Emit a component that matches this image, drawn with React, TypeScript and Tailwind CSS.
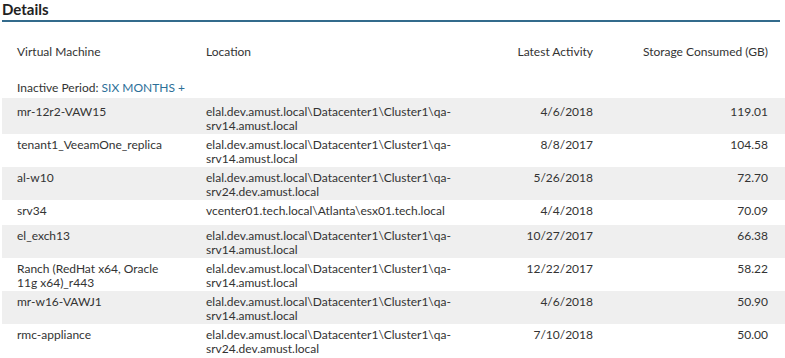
const rows = [
  { vm: "mr-12r2-VAW15", loc: "elal.dev.amust.local\\Datacenter1\\Cluster1\\qa-srv14.amust.local", date: "4/6/2018", gb: "119.01" },
  { vm: "tenant1_VeeamOne_replica", loc: "elal.dev.amust.local\\Datacenter1\\Cluster1\\qa-srv14.amust.local", date: "8/8/2017", gb: "104.58" },
  { vm: "al-w10", loc: "elal.dev.amust.local\\Datacenter1\\Cluster1\\qa-srv24.dev.amust.local", date: "5/26/2018", gb: "72.70" },
  { vm: "srv34", loc: "vcenter01.tech.local\\Atlanta\\esx01.tech.local", date: "4/4/2018", gb: "70.09" },
  { vm: "el_exch13", loc: "elal.dev.amust.local\\Datacenter1\\Cluster1\\qa-srv14.amust.local", date: "10/27/2017", gb: "66.38" },
  { vm: "Ranch (RedHat x64, Oracle 11g x64)_r443", loc: "elal.dev.amust.local\\Datacenter1\\Cluster1\\qa-srv14.amust.local", date: "12/22/2017", gb: "58.22" },
  { vm: "mr-w16-VAWJ1", loc: "elal.dev.amust.local\\Datacenter1\\Cluster1\\qa-srv14.amust.local", date: "4/6/2018", gb: "50.90" },
  { vm: "rmc-appliance", loc: "elal.dev.amust.local\\Datacenter1\\Cluster1\\qa-srv24.dev.amust.local", date: "7/10/2018", gb: "50.00" },
];

const cols = "grid grid-cols-[198px_260px_140px_182px_1fr]";

export default function App() {
  return (
    <div className="w-[785px] h-[358px] overflow-hidden bg-white text-[#333] font-['Lato',sans-serif] text-[12px] leading-[15px]">
      <div className="pl-[2px]">
        <h2 className="h-[20px] font-bold text-[15px] leading-[18px] text-[#222]">Details</h2>
        <div className="h-[2px] bg-[#336b8c] mr-[5px]" />

        <div className={`${cols} mt-[22px] h-[14px] items-center`}>
          <div className="pl-[15px]">Virtual Machine</div>
          <div className="pl-[6px]">Location</div>
          <div className="text-right pr-[7px]">Latest Activity</div>
          <div className="text-right pr-[14px]">Storage Consumed (GB)</div>
        </div>

        <div className="mt-[22px] h-[15px] pl-[15px]">
          Inactive Period: <span className="text-[#2c6f98]">SIX MONTHS +</span>
        </div>

        <div className="mt-[3px] leading-[14px]">
          {rows.map((r, i) => (
            <div
              key={i}
              className={`${cols} items-start min-h-[25px] pb-[1px] ${i === 0 ? "pt-[7px]" : "pt-[4px]"} ${i % 2 === 0 ? "bg-[#efefef]" : "bg-white"}`}
            >
              <div className="pl-[15px] pr-[33px]">{r.vm}</div>
              <div className="pl-[6px] pr-[6px]">{r.loc}</div>
              <div className="text-right pr-[7px]">{r.date}</div>
              <div className="text-right pr-[14px]">{r.gb}</div>
            </div>
          ))}
        </div>
      </div>
    </div>
  );
}
